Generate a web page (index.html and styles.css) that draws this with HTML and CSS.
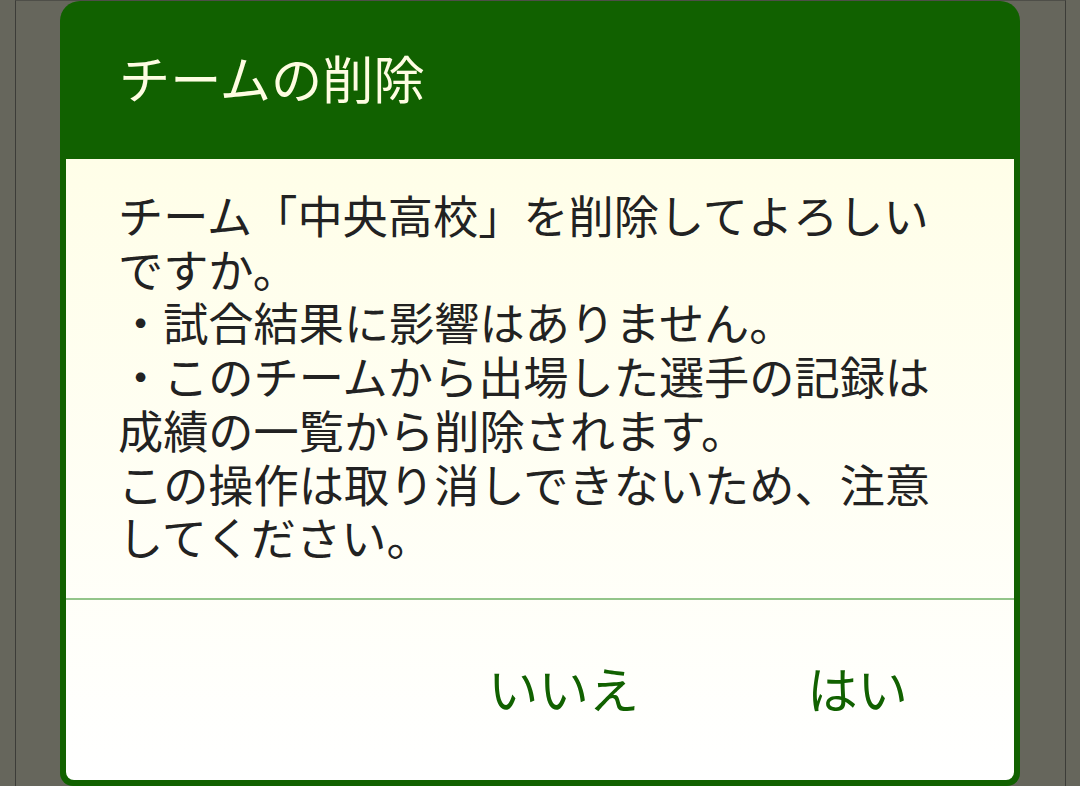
FILE: index.html
```html
<!DOCTYPE html>
<html lang="ja">
<head>
<meta charset="utf-8">
<link rel="stylesheet" href="styles.css">
</head>
<body>
<div class="screen">
  <div class="dialog">
    <div class="header">チームの削除</div>
    <div class="panel">
      <div class="message">チーム「中央高校」を削除してよろしいですか。<br>・試合結果に影響はありません。<br>・このチームから出場した選手の記録は成績の一覧から削除されます。<br>この操作は取り消しできないため、注意してください。</div>
      <div class="buttons">
        <span class="btn">いいえ</span>
        <span class="btn">はい</span>
      </div>
    </div>
  </div>
</div>
</body>
</html>
```
FILE: styles.css
```css
html, body {
  margin: 0;
  padding: 0;
  width: 1080px;
  height: 786px;
  overflow: hidden;
  background: #66665c;
  font-family: "Noto Sans CJK JP", "Noto Sans", sans-serif;
}
.screen {
  box-sizing: border-box;
  height: 786px;
  margin-left: 15px;
  width: 1051px;
  border-left: 1px solid #3c3c38;
  border-right: 1px solid #3c3c38;
  border-top: 1px solid #4e4e48;
  padding-left: 44px;
}
.dialog {
  box-sizing: border-box;
  width: 960px;
  height: 785px;
  background: #116100;
  border-radius: 20px 20px 13px 13px;
  padding: 0 6px 6px;
  display: flex;
  flex-direction: column;
}
.header {
  height: 158px;
  flex: none;
  display: flex;
  align-items: center;
  padding-left: 53px;
  padding-bottom: 5px;
  box-sizing: border-box;
  color: #fffde2;
  font-size: 51.2px;
  line-height: 1;
}
.panel {
  flex: 1;
  display: flex;
  flex-direction: column;
  background: linear-gradient(#fffee8, #ffffff);
  border-radius: 0 0 8px 8px;
}
.message {
  padding: 29px 52px 34px;
  font-size: 45.2px;
  line-height: 53.7px;
  color: #222222;
  border-bottom: 2px solid #93c58a;
}
.buttons {
  flex: 1;
  display: flex;
  justify-content: flex-end;
  align-items: center;
  gap: 168px;
  padding-right: 106px;
  padding-bottom: 4px;
}
.btn {
  color: #116100;
  font-size: 50.4px;
  line-height: 1;
}
```
